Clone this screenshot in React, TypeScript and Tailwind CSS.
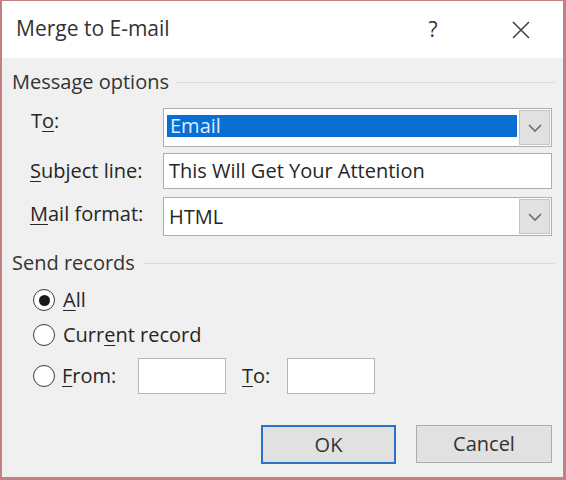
import React from "react";

const font = { fontFamily: '"Open Sans", "Noto Sans", sans-serif' };

function Chevron() {
  return (
    <svg width="16" height="10" viewBox="0 0 16 10">
      <path d="M2 2 L8 8 L14 2" fill="none" stroke="#6e6e6e" strokeWidth="1.6" />
    </svg>
  );
}

function Radio({ checked }: { checked?: boolean }) {
  return (
    <div className="w-[22px] h-[22px] rounded-full border-[1.5px] border-[#3c3c3c] bg-white flex items-center justify-center shrink-0">
      {checked && <div className="w-[11px] h-[11px] rounded-full bg-[#1a1a1a]" />}
    </div>
  );
}

function U({ children }: { children: React.ReactNode }) {
  return <span className="underline underline-offset-[3px] decoration-1">{children}</span>;
}

function DropButton() {
  return (
    <div className="w-[31px] my-[1px] mr-[1px] bg-[#e1e1e1] border border-[#c4c4c4] flex items-center justify-center">
      <Chevron />
    </div>
  );
}

export default function App() {
  return (
    <div
      className="w-[566px] h-[480px] bg-[#f0f0f0] border-l-2 border-r-[3px] border-b-[3px] border-t border-[#c47f83] flex flex-col text-[#262626] text-[20px] leading-none"
      style={font}
    >
      {/* Title bar */}
      <div className="h-[57px] bg-white flex items-center pl-[14px] shrink-0">
        <div className="text-[21px] text-[#333] flex-1 pb-[2px]">Merge to E-mail</div>
        <div className="text-[21px] text-[#333] w-[20px] text-center mr-[68px]">?</div>
        <svg width="20" height="20" viewBox="0 0 20 20" className="mr-[32px]">
          <path d="M2 2 L18 18 M18 2 L2 18" stroke="#444" strokeWidth="1.6" fill="none" />
        </svg>
      </div>

      {/* Body */}
      <div className="flex flex-col pl-[10px] pr-[8px] pt-[13px]">
        <div className="flex items-center h-[22px]">
          <span className="text-[#333]">Message options</span>
          <div className="flex-1 h-px bg-[#dadada] ml-[8px]" />
        </div>

        <div className="flex flex-col mt-[15px] pr-[3px]">
          <div className="flex items-center h-[39px]">
            <div className="w-[151px] pl-[19px] self-start pt-[3px]">
              T<U>o</U>:
            </div>
            <div className="flex-1 h-full border border-[#adadad] bg-white flex items-stretch">
              <div className="flex-1 pl-[3px] pt-[6px] pb-[9px] pr-[2px]">
                <div className="h-full bg-[#0a6fd3] text-[#dcecff] flex items-center pl-[3px]">Email</div>
              </div>
              <DropButton />
            </div>
          </div>

          <div className="flex items-center h-[36px] mt-[6px]">
            <div className="w-[151px] pl-[18px]">
              <U>S</U>ubject line:
            </div>
            <div className="flex-1 h-full border border-[#adadad] bg-white flex items-center pl-[5px]">
              This Will Get Your Attention
            </div>
          </div>

          <div className="flex items-center h-[39px] mt-[8px]">
            <div className="w-[151px] pl-[18px] self-start pt-[7px]">
              <U>M</U>ail format:
            </div>
            <div className="flex-1 h-full border border-[#adadad] bg-white flex items-stretch">
              <div className="flex-1 flex items-center pl-[5px]">HTML</div>
              <DropButton />
            </div>
          </div>
        </div>

        <div className="flex items-center h-[22px] mt-[16px]">
          <span className="text-[#333]">Send records</span>
          <div className="flex-1 h-px bg-[#dadada] ml-[8px]" />
        </div>

        <div className="flex flex-col pl-[21px] mt-[14px]">
          <div className="flex items-center h-[24px] gap-[8px]">
            <Radio checked />
            <span>
              <U>A</U>ll
            </span>
          </div>
          <div className="flex items-center h-[24px] gap-[8px] mt-[11px]">
            <Radio />
            <span>
              Curr<U>e</U>nt record
            </span>
          </div>
          <div className="flex items-center h-[36px] mt-[11px]">
            <Radio />
            <span className="ml-[7px] w-[76px]">
              <U>F</U>rom:
            </span>
            <div className="w-[88px] h-[36px] bg-white border border-[#b5b5b5]" />
            <span className="ml-[16px] w-[45px]">
              <U>T</U>o:
            </span>
            <div className="w-[88px] h-[36px] bg-white border border-[#b5b5b5]" />
          </div>
        </div>

        <div className="flex justify-end gap-[20px] mt-[31px] pr-[3px]">
          <div className="w-[135px] h-[39px] border-2 border-[#2a73c6] bg-[#e1e1e1] flex items-center justify-center text-[#333]">
            OK
          </div>
          <div className="w-[136px] h-[38px] border border-[#adadad] bg-[#e1e1e1] flex items-center justify-center text-[#333]">
            Cancel
          </div>
        </div>
      </div>
    </div>
  );
}
